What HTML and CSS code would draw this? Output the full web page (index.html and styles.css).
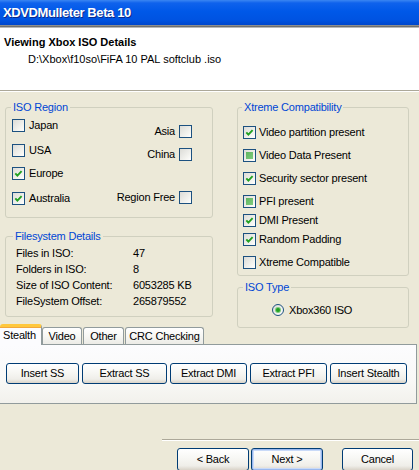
FILE: index.html
```html
<!DOCTYPE html>
<html>
<head>
<meta charset="utf-8">
<link rel="stylesheet" href="styles.css">
</head>
<body>
<div class="window">
  <div class="titlebar"><span class="title">XDVDMulleter Beta 10</span></div>
  <div class="frame-edge"></div>
  <div class="header">
    <div class="header-title">Viewing Xbox ISO Details</div>
    <div class="header-path">D:\Xbox\f10so\FiFA 10 PAL softclub .iso</div>
  </div>
  <div class="main">
    <div class="col-left">
      <fieldset class="group group-region">
        <legend>ISO Region</legend>
        <div class="region-cols">
          <div class="region-left">
            <div class="check"><span class="box"></span>Japan</div>
            <div class="check r-usa"><span class="box"></span>USA</div>
            <div class="check r-europe"><span class="box"><svg class="tick" viewBox="0 0 11 11" width="11" height="11"><path d="M2.3 5.3 L4.4 7.6 L8.6 3.2" fill="none" stroke="#21a121" stroke-width="1.9"/></svg></span>Europe</div>
            <div class="check r-australia"><span class="box"><svg class="tick" viewBox="0 0 11 11" width="11" height="11"><path d="M2.3 5.3 L4.4 7.6 L8.6 3.2" fill="none" stroke="#21a121" stroke-width="1.9"/></svg></span>Australia</div>
          </div>
          <div class="region-right">
            <div class="check r-asia">Asia<span class="box"></span></div>
            <div class="check r-china">China<span class="box"></span></div>
            <div class="check r-free">Region Free<span class="box"></span></div>
          </div>
        </div>
      </fieldset>
      <fieldset class="group group-fs">
        <legend>Filesystem Details</legend>
        <div class="fs-grid">
          <span>Files in ISO:</span><span>47</span>
          <span>Folders in ISO:</span><span>8</span>
          <span>Size of ISO Content:</span><span>6053285 KB</span>
          <span>FileSystem Offset:</span><span>265879552</span>
        </div>
      </fieldset>
    </div>
    <div class="col-right">
      <fieldset class="group group-xtreme">
        <legend>Xtreme Compatibility</legend>
        <div class="x-list">
          <div class="check"><span class="box"><svg class="tick" viewBox="0 0 11 11" width="11" height="11"><path d="M2.3 5.3 L4.4 7.6 L8.6 3.2" fill="none" stroke="#21a121" stroke-width="1.9"/></svg></span>Video partition present</div>
          <div class="check"><span class="box mixed"></span>Video Data Present</div>
          <div class="check"><span class="box"><svg class="tick" viewBox="0 0 11 11" width="11" height="11"><path d="M2.3 5.3 L4.4 7.6 L8.6 3.2" fill="none" stroke="#21a121" stroke-width="1.9"/></svg></span>Security sector present</div>
          <div class="check"><span class="box mixed"></span>PFI present</div>
          <div class="check x-tight"><span class="box"><svg class="tick" viewBox="0 0 11 11" width="11" height="11"><path d="M2.3 5.3 L4.4 7.6 L8.6 3.2" fill="none" stroke="#21a121" stroke-width="1.9"/></svg></span>DMI Present</div>
          <div class="check x-tight"><span class="box"><svg class="tick" viewBox="0 0 11 11" width="11" height="11"><path d="M2.3 5.3 L4.4 7.6 L8.6 3.2" fill="none" stroke="#21a121" stroke-width="1.9"/></svg></span>Random Padding</div>
          <div class="check"><span class="box"></span>Xtreme Compatible</div>
        </div>
      </fieldset>
      <fieldset class="group group-type">
        <legend>ISO Type</legend>
        <div class="radio"><span class="radio-dot"></span>Xbox360 ISO</div>
      </fieldset>
    </div>
    <div class="tabs">
      <div class="tab tab-active tab-stealth">Stealth</div>
      <div class="tab tab-video">Video</div>
      <div class="tab tab-other">Other</div>
      <div class="tab tab-crc">CRC Checking</div>
    </div>
  </div>
  <div class="tab-panel">
    <button class="btn w-insert-ss">Insert SS</button>
    <button class="btn w-extract-ss">Extract SS</button>
    <button class="btn w-extract-dmi">Extract DMI</button>
    <button class="btn w-extract-pfi">Extract PFI</button>
    <button class="btn w-insert-stealth">Insert Stealth</button>
  </div>
  <div class="footer">
    <div class="footer-sep"></div>
    <div class="footer-buttons">
      <button class="btn w-nav">&lt; Back</button>
      <button class="btn w-nav btn-default">Next &gt;</button>
      <button class="btn w-nav btn-cancel">Cancel</button>
    </div>
  </div>
</div>
</body>
</html>
```

FILE: styles.css
```css
* { box-sizing: border-box; }
html, body { margin: 0; padding: 0; }
body {
  width: 419px;
  height: 470px;
  overflow: hidden;
  background: #ece9d8;
  font-family: "Liberation Sans", Arial, sans-serif;
  font-size: 11px;
  color: #000;
  letter-spacing: -0.2px;
}
.window { width: 419px; height: 470px; display: flex; flex-direction: column; }

.titlebar {
  height: 25px;
  flex: none;
  background: linear-gradient(180deg, #3b86f2 0%, #0f62ec 12%, #0058e8 45%, #0053e1 80%, #0046cb 100%);
  padding-left: 3px;
  display: flex;
  align-items: center;
}
.title {
  color: #fff;
  font-weight: bold;
  font-size: 13px;
  letter-spacing: -0.4px;
  text-shadow: 1px 1px 0 #0b2a8a;
}
.frame-edge {
  height: 3px;
  flex: none;
  background: linear-gradient(180deg, #8e8e8e 0, #8e8e8e 1px, #6e6e6e 1px, #6e6e6e 2px, #b8b8b8 2px);
}
.header {
  height: 63px;
  flex: none;
  background: #fff;
  padding: 8px 0 0 4px;
  border-bottom: 1px solid #aca899;
  box-shadow: 0 1px 0 #fff;
  letter-spacing: 0;
}
.header-title { font-weight: bold; line-height: 13px; }
.header-path { line-height: 13px; margin-top: 4px; padding-left: 24px; }

.main {
  display: grid;
  grid-template-columns: 213px 172px;
  grid-template-areas: "left right" "tabs right";
  column-gap: 24px;
  padding-top: 10px;
  flex: none;
}
.col-left { grid-area: left; }
.col-right { grid-area: right; align-self: start; }

.group {
  margin: 0;
  min-width: 0;
  border: 1px solid #d0d0bf;
  border-radius: 3px;
}
.group legend {
  color: #0046d5;
  padding: 0 2px;
  line-height: 13px;
}

.group-region { margin-left: 5px; width: 208px; padding: 5px 20px 12px 5px; }
.region-cols { display: flex; justify-content: space-between; }
.region-left { display: flex; flex-direction: column; padding-left: 1px; }
.region-right { display: flex; flex-direction: column; align-items: flex-end; }
.r-usa { margin-top: 12px; }
.r-europe { margin-top: 10px; }
.r-australia { margin-top: 12px; }
.r-asia { margin-top: 6px; }
.r-china { margin-top: 10px; }
.r-free { margin-top: 30px; }

.check {
  display: flex;
  align-items: center;
  gap: 4px;
  height: 13px;
  line-height: 13px;
  white-space: nowrap;
}
.box {
  flex: none;
  width: 13px;
  height: 13px;
  border: 1px solid #1c5180;
  background: linear-gradient(135deg, #dcdcd7 0%, #f4f4f0 70%, #ffffff 100%);
  display: flex;
  align-items: center;
  justify-content: center;
}
.tick { display: block; }
.box.mixed::after {
  content: "";
  width: 7px;
  height: 7px;
  background: linear-gradient(135deg, #5fb55f, #7fcb7f);
}

.group-fs { margin: 12px 0 0 5px; width: 208px; padding: 2px 5px 7px 7px; }
.fs-grid {
  display: grid;
  grid-template-columns: 117px auto;
  padding-left: 3px;
  line-height: 16px;
}

.group-xtreme { width: 172px; padding: 12px 5px 6px 4px; }
.x-list { display: flex; flex-direction: column; gap: 10px; padding-left: 1px; }
.x-list .check { gap: 3px; }
.x-list .x-tight { margin-top: -4px; }

.group-type { width: 172px; margin-top: 5px; padding: 9px 5px 11px 5px; }
.radio {
  display: flex;
  align-items: center;
  gap: 5px;
  height: 13px;
  padding-left: 29px;
}
.radio-dot {
  flex: none;
  width: 12px;
  height: 12px;
  border: 1px solid #1c5180;
  border-radius: 50%;
  background: linear-gradient(135deg, #dcdcd7, #ffffff);
  display: flex;
  align-items: center;
  justify-content: center;
}
.radio-dot::after {
  content: "";
  width: 4px;
  height: 4px;
  border-radius: 50%;
  background: #21a121;
  box-shadow: 0 0 0 1px #7ccb7c;
}

.tabs {
  grid-area: tabs;
  margin-top: 7px;
  height: 20px;
  display: flex;
  align-items: flex-end;
  position: relative;
  z-index: 1;
}
.tab {
  height: 17px;
  border: 1px solid #919b9c;
  border-bottom: none;
  border-radius: 3px 3px 0 0;
  background: linear-gradient(180deg, #ffffff 0%, #f7f7f4 50%, #ecebe6 100%);
  display: flex;
  align-items: center;
  justify-content: center;
  line-height: 13px;
}
.tab-active {
  height: 21px;
  margin-bottom: -1px;
  border-left: none;
  border-top: 3px solid #ffc83c;
  box-shadow: inset 0 1px 0 #f2a73a;
  background: #fcfcfe;
  justify-content: flex-start;
  padding-left: 3px;
  padding-bottom: 2px;
}
.tab-stealth { width: 42px; }
.tab-video { width: 40px; }
.tab-other { width: 41px; margin-left: 1px; }
.tab-crc { width: 79px; margin-left: 1px; }

.tab-panel {
  width: 417px;
  flex: none;
  border: 1px solid #919b9c;
  border-left: none;
  background: linear-gradient(180deg, #fcfcfe 0%, #f9f9f7 60%, #f2f1ec 100%);
  padding: 18px 0 19px 6px;
  display: flex;
  gap: 3px;
}

.btn {
  height: 21px;
  margin: 0;
  padding: 0;
  border: 1px solid #003c74;
  border-radius: 3px;
  background: linear-gradient(180deg, #ffffff 0%, #f8f8f5 40%, #efeee9 80%, #d9d3c8 100%);
  font-family: "Liberation Sans", Arial, sans-serif;
  font-size: 11px;
  letter-spacing: -0.2px;
  color: #000;
  line-height: 13px;
}
.w-insert-ss { width: 73px; }
.w-extract-ss { width: 85px; }
.w-extract-dmi { width: 77px; }
.w-extract-pfi { width: 77px; }
.w-insert-stealth { width: 77px; }

.footer { flex: 1; display: flex; flex-direction: column; align-items: flex-end; }
.footer-sep {
  margin-top: 35px;
  width: 257px;
  height: 2px;
  border-top: 1px solid #aca899;
  border-bottom: 1px solid #ffffff;
}
.footer-buttons {
  margin-top: 7px;
  padding-right: 6px;
  display: flex;
  gap: 2px;
}
.w-nav { width: 72px; height: 23px; }
.btn-default { box-shadow: inset 0 0 0 1px #9ab8ee, inset 0 0 0 2px #c9daf8; }
.btn-cancel { width: 71px; margin-left: 17px; }
```
